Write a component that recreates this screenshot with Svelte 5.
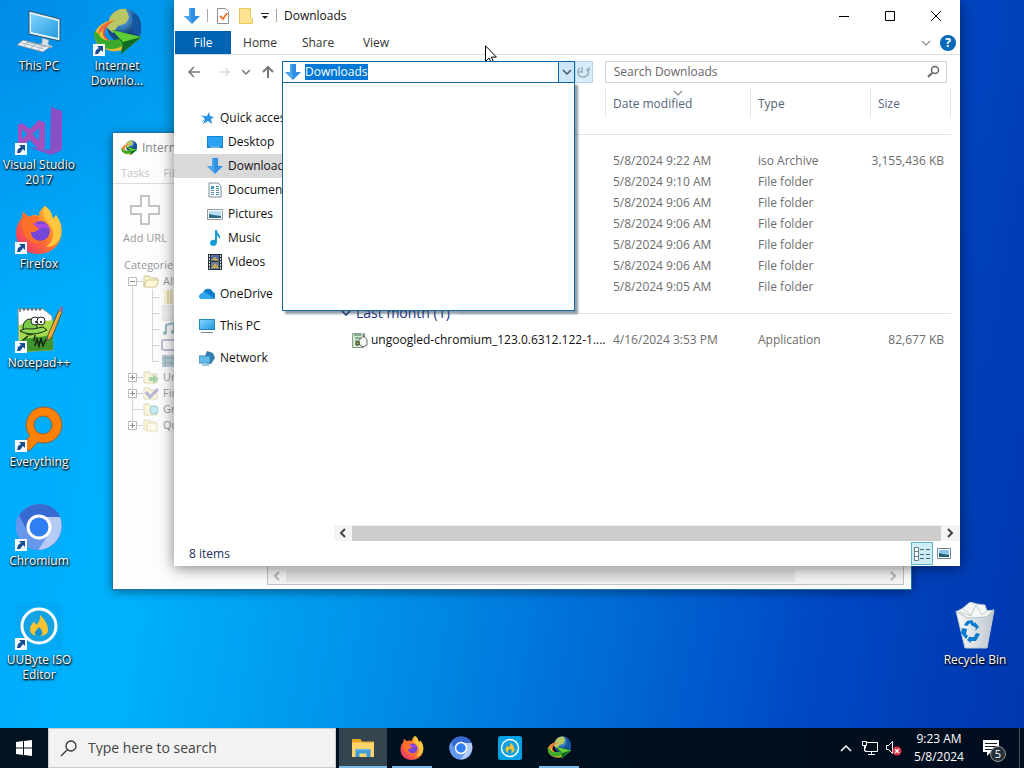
<script>
  import { onMount } from "svelte";

  let path = $state("Downloads");
  let query = $state("");
  let pathInput;

  const shortcuts = [
    { label: "This PC", icon: "pc", col: 1, row: 1 },
    { label: "Visual Studio 2017", icon: "vs", col: 1, row: 2, link: true },
    { label: "Firefox", icon: "firefox", col: 1, row: 3, link: true },
    { label: "Notepad++", icon: "notepad", col: 1, row: 4, link: true },
    { label: "Everything", icon: "everything", col: 1, row: 5, link: true },
    { label: "Chromium", icon: "chromium", col: 1, row: 6, link: true },
    { label: "UUByte ISO Editor", icon: "uubyte", col: 1, row: 7, link: true },
    { label: "Internet Downlo...", icon: "idm", col: 2, row: 1, link: true },
    { label: "Recycle Bin", icon: "bin", col: -2, row: 7 },
  ];

  const places = [
    { label: "Quick access", icon: "star" },
    { label: "Desktop", icon: "desktop", sub: true },
    { label: "Downloads", icon: "arrow", sub: true, selected: true },
    { label: "Documents", icon: "document", sub: true },
    { label: "Pictures", icon: "picture", sub: true },
    { label: "Music", icon: "music", sub: true },
    { label: "Videos", icon: "video", sub: true },
    { label: "OneDrive", icon: "cloud", gap: true },
    { label: "This PC", icon: "monitor", gap: true },
    { label: "Network", icon: "network", gap: true },
  ];

  const recent = [
    { date: "5/8/2024 9:22 AM", type: "iso Archive", size: "3,155,436 KB" },
    { date: "5/8/2024 9:10 AM", type: "File folder" },
    { date: "5/8/2024 9:06 AM", type: "File folder" },
    { date: "5/8/2024 9:06 AM", type: "File folder" },
    { date: "5/8/2024 9:06 AM", type: "File folder" },
    { date: "5/8/2024 9:06 AM", type: "File folder" },
    { date: "5/8/2024 9:05 AM", type: "File folder" },
  ];

  const categories = [
    { label: "All", icon: "folder", box: "minus" },
    { icon: "zip", sub: true },
    { icon: "page", sub: true },
    { icon: "note", sub: true },
    { icon: "screen", sub: true },
    { icon: "film", sub: true },
    { label: "Un", icon: "green", box: "plus" },
    { label: "Fin", icon: "check", box: "plus" },
    { label: "Gr", icon: "globe" },
    { label: "Qu", icon: "stack", box: "plus" },
  ];

  const tasks = [
    { name: "File Explorer", icon: "explorer", open: true, active: true },
    { name: "Firefox", icon: "firefox", open: true },
    { name: "Chromium", icon: "chromium" },
    { name: "UUByte", icon: "uubyte" },
    { name: "Internet Download Manager", icon: "idm", open: true },
  ];

  onMount(() => {
    pathInput.focus();
    pathInput.select();
  });
</script>

{#snippet icon(name)}
  <svg class="icon" viewBox="0 0 48 48" aria-hidden="true">
    {#if name === "pc"}
      <path d="M14 3l31 8v22l-31-7z" fill="#e4f1f8" stroke="#29536e" />
      <path d="M16 6l27 7v17l-27-6z" fill="url(#screen)" />
      <path d="M27 30l7 2-1 4 5 3-8 2-9-4 6-2z" fill="#d8e2e8" stroke="#7890a0" stroke-width=".6" />
      <path d="M8 32l27 7-7 5L2 37z" fill="#eef2f4" stroke="#6f8796" stroke-width=".8" />
      <path d="M7 35l22 6M11 34l20 5M14 34l-5 4M21 36l-5 4M28 38l-5 4" stroke="#a7b6bf" fill="none" />
    {:else if name === "vs"}
      <path d="M36 0l11 4v39l-11 5L13 40l22 3z" fill="#8b50c6" />
      <path fill-rule="evenodd" d="M24 13l6 3v25l-6 2-9-10-8 6-4-2V18l4-2 8 6zM24 21l-6 6 6 7zM7 22v10l5-5z" fill="#a34fbd" />
    {:else if name === "firefox"}
      <path d="M30 0c6 5 7 9 8 13l3-4c5 7 7 14 5 22-3 11-12 17-23 17C10 48 1 39 1 27c0-7 3-12 6-15l1-6 6 5c4-3 8-2 10-1 0-5 3-8 6-10z" fill="url(#fox)" />
      <path d="M30 0c7 5 7 10 8 13l3-4c5 7 7 15 4 23-3 7-9 9-14 9 9-7 9-16 4-22-4-5-9-9-5-19z" fill="#ffc63e" />
      <circle cx="25" cy="25" r="10" fill="#7547d8" />
      <path d="M7 12l1-6 6 5c4-2 8-1 11 1l-5 5 7 4c-4 1-5 6-11 5 0 6 6 11 14 8-10 8-25 0-23-22z" fill="#ff702b" />
      <path d="M17 17l8 1c5-1 9 2 10 6-3-3-7-4-11-1z" fill="#a94ae2" />
    {:else if name === "notepad"}
      <path d="M3 4h25l9 7 1 34-34 2z" fill="#fff" stroke="#8f9c8f" />
      <path d="M4 20l34-5v30L5 47z" fill="#a5da4c" />
      <path d="M4 36c10-5 20-2 34-7v16L5 47z" fill="#3f962c" />
      <path d="M5 4v3m4-4v3m4-3v3m4-3v3m4-3v3m4-3v3" stroke="#333" />
      <ellipse cx="15" cy="22" rx="7" ry="8" fill="#7ac94c" stroke="#182818" />
      <path d="M5 26c8 4 18 4 27-1l-4-3-10 2c-5 0-9-1-13 2z" fill="#92d955" stroke="#182818" />
      <circle cx="20" cy="16" r="4" fill="#fff" stroke="#182818" />
      <circle cx="26" cy="16" r="4" fill="#fff" stroke="#182818" />
      <circle cx="21" cy="17" r="1" /><circle cx="26" cy="17" r="1" />
      <path d="M13 31l-5 4m12-5l-1 6m1 5l2-7 2 7 2-8 2 8 3-7" fill="none" stroke="#162516" stroke-width="1.5" />
      <path d="M33 30L44 5l3 2-10 25-5 4z" fill="#edac32" stroke="#63503b" />
      <path d="M44 5l2-4 3 2-2 5z" fill="#8d70a6" />
    {:else if name === "everything"}
      <path fill-rule="evenodd" d="M28 3a18 18 0 1 1-5 35l-9 9-8-6 9-9A18 18 0 0 1 28 3zm0 9a9 9 0 1 0 0 18 9 9 0 0 0 0-18z" fill="#ff8206" stroke="#8b633c" />
    {:else if name === "chromium"}
      <circle cx="24" cy="24" r="23" fill="#6596e8" />
      <path d="M4 12C17-5 41-1 46 16H24l-9 17z" fill="#376bd2" />
      <path d="M24 14h21c6 17-7 33-22 33l11-17z" fill="#b4ccf5" />
      <path d="M3 13l12 20c5 6 13 5 18-1L23 47C6 46-4 28 3 13z" fill="#6597ed" />
      <circle cx="24" cy="24" r="11" fill="#2f7ff2" stroke="#fff" stroke-width="3" />
    {:else if name === "uubyte"}
      <rect width="48" height="48" rx="5" fill="#05a1e6" />
      <circle cx="24" cy="24" r="17" fill="#13a2e2" stroke="#fff" stroke-width="3" />
      <path d="M25 13c5 5 8 9 8 15 0 4-4 6-9 6s-9-2-9-7c0-4 3-5 4-8l2 4c4-3 4-6 4-10z" fill="#f7c331" />
      <path d="M24 25c3 3 4 5 3 7-1 3-6 3-7 0-1-2 2-4 4-7z" fill="#0a91d1" />
    {:else if name === "idm"}
      <circle cx="31" cy="18" r="17" fill="url(#earth)" />
      <path d="M17 9c4-6 10-9 16-8l3 8-3 6-8 3-5 7-7-6z" fill="#b9c865" />
      <path d="M39 5c9 7 12 16 7 25l-6-7z" fill="#1456a2" />
      <path d="M22 12C9 15 4 26 17 36l13-2C7 35 7 20 22 12z" fill="#ef4936" />
      <path d="M21 12C0 14-5 34 12 41c9 4 15 2 20 0v-8c-14 2-22-1-22-8 0-6 5-10 11-13z" fill="#e8bb31" />
      <path d="M1 23c-1 17 18 22 28 15l-1 8 20-16-28-8 7 9C13 34 8 32 6 26z" fill="#3ca92c" />
      <path d="M22 12C12 14 6 18 5 26l4-3c3-5 7-9 13-11z" fill="#f26a42" />
      <path d="M19 22l29 7-20 17 2-10z" fill="#126b25" />
      <path d="M19 22l29 7-18 5z" fill="#5fce35" />
    {:else if name === "bin"}
      <path d="M5 9l38-1-7 38H14z" fill="#dfe5e8" />
      <path d="M5 9l9 4 20 1 9-6-7 38H14z" fill="url(#bin)" stroke="#bec7cc" />
      <path d="M5 10l7-4 7-6 7 2 8 1 2 6 7-1-8 7-18 1z" fill="#f5f7f7" stroke="#b9c3c8" />
      <path d="M12 7l8 6 5-10 6 10 5-4M8 10l13 4" fill="none" stroke="#c3ccd0" />
      <path d="M16 19l5-1 3 5-3 1-2-3-3 3-3-1zm8 1l4 5-4 4 1-3-3-2zM11 26l5 1-1 5 2 2-2 3-5-6zm8 9h4l2-4 4 1-4 7h-5v2l-4-3 3-4z" fill="#087bd1" />
    {:else if name === "explorer"}
      <path d="M2 6h17l3 5h24v30H2z" fill="#e8a524" />
      <path d="M2 13h44v29H2z" fill="#ffd56b" />
      <path d="M9 42V26h30v16h-8v-7H17v7z" fill="#3e9bd8" />
      <path d="M9 26h30v3H9z" fill="#67b6e6" />
    {/if}
  </svg>
{/snippet}

{#snippet small(name)}
  <svg class="small" viewBox="0 0 16 16" aria-hidden="true">
    {#if name === "arrow"}
      <path d="M5 0h6v8h5l-8 8-8-8h5z" fill="#2f8fe2" />
      <path d="M5 0h2v9l1 6-8-7h5z" fill="#4aa6ec" />
    {:else if name === "star"}
      <path d="M10 2l1 4 4 1-3 2 1 5-4-3-5 3 2-5-3-3h5z" fill="#2b92e5" />
      <path d="M2 6h4M3 12l3-3" stroke="#68b8f4" />
    {:else if name === "desktop"}
      <path d="M0 2h16v12H0z" fill="#1684d6" />
      <path d="M1 3h14v9H1z" fill="#29a3f4" />
      <path d="M3 13h10" stroke="#a5d7fa" />
    {:else if name === "document"}
      <path d="M2 1h9l3 3v11H2z" fill="#fff" stroke="#7f8e98" />
      <path d="M4 4h3v3H4z" fill="#4498bd" />
      <path d="M9 4.500h3M9 6.500h3M4 8.500h3m2 0h3M4 10.500h3m2 0h3M4 12.500h3m2 0h3" stroke="#4d91ad" />
    {:else if name === "picture"}
      <path d="M.5 3.500h15v10H.5z" fill="#fff" stroke="#8f999e" />
      <path d="M2 5h12v7H2z" fill="#b9def2" />
      <path d="M2 8l5 1 7 1v2H2z" fill="#326c88" />
    {:else if name === "music"}
      <path d="M8 0h2c0 4 4 4 3 9l-3-4v7c0 5-7 5-7 1 0-3 3-4 5-3z" fill="#159bd7" />
    {:else if name === "video"}
      <path d="M1 0h14v16H1z" fill="#283039" />
      <path d="M4 1h8v6H4z" fill="#536ca1" /><path d="M4 8h8v7H4z" fill="#697a95" />
      <path d="M4 6l4-3 4 4M4 14l4-5 4 5" fill="#c5a64f" />
      <path d="M2.500 1v15M13.500 1v15" stroke="#dbe3ea" stroke-dasharray="2 1" />
    {:else if name === "cloud"}
      <path d="M4 7c1-5 8-6 10-1 3 1 3 7 0 7H2C-1 12 0 8 4 7z" fill="#087dcc" />
      <path d="M3 7c3-2 6 1 11 5v1H2c-3-1-2-5 1-6z" fill="#33a7ed" />
    {:else if name === "monitor"}
      <path d="M0 1h16v11H0z" fill="#2188c4" />
      <path d="M1 2h14v9H1z" fill="url(#screen)" />
      <path d="M2 14.500h12" stroke="#758896" />
    {:else if name === "network"}
      <path d="M8 1l6 2 2 5-4 6-5-1-1-7z" fill="#367dac" />
      <path d="M0 6h11v7H0z" fill="#64bae8" stroke="#328bc0" />
      <path d="M3 15h7" stroke="#398bc0" />
    {:else if name === "properties"}
      <path d="M2.500.500h8l3 3v12h-11z" fill="#fff" stroke="#8a9094" />
      <path d="M5 8l3 3 4-6" fill="none" stroke="#ed7734" stroke-width="2" />
    {:else if name === "newfolder"}
      <path d="M1.500.500h11v9l2 1v5h-13z" fill="#ffe391" stroke="#e6c85e" />
    {:else if name === "app"}
      <path d="M.5 1.500h9l2 3v11H.5z" fill="#d5ead4" stroke="#8c988b" />
      <path d="M2 3h7M3 6h6M3 9h3" stroke="#367647" />
      <path d="M7 8l5-4 3 4v5l-4 2-4-3z" fill="#f6f7ec" stroke="#667" />
      <path d="M12 1v4M4 10h3v3H4z" stroke="#263c2d" fill="#a8ca33" />
    {:else if name === "refresh"}
      <path d="M4 4c-4 3-2 9 3 9 6 0 7-6 3-8M6 3v5m-3 0h4M13 3v4" fill="none" stroke="#93aebf" stroke-width="1.500" />
    {:else if name === "search"}
      <circle cx="10" cy="6" r="3.500" fill="none" stroke="currentColor" stroke-width="1.500" />
      <path d="M7 9l-4 4" stroke="currentColor" stroke-width="2" />
    {:else if name === "down"}
      <path d="M4 6l4 4 4-4" fill="none" stroke="currentColor" stroke-width="1.500" />
    {:else if name === "left"}
      <path d="M10 4L6 8l4 4" fill="none" stroke="currentColor" stroke-width="2" />
    {:else if name === "right"}
      <path d="M6 4l4 4-4 4" fill="none" stroke="currentColor" stroke-width="2" />
    {:else if name === "back"}
      <path d="M14 8H3m5-5L3 8l5 5" fill="none" stroke="currentColor" stroke-width="1.500" />
    {:else if name === "forward"}
      <path d="M3 8h10M9 4l4 4-4 4" fill="none" stroke="currentColor" stroke-width="1.500" />
    {:else if name === "up"}
      <path d="M8 14V3M3 8l5-5 5 5" fill="none" stroke="currentColor" stroke-width="2" />
    {:else if name === "folder"}
      <path d="M1 14V3h5l2 2h6v3H4z" fill="#f5ecae" stroke="#b4a557" />
      <path d="M1 14l3-7h12l-3 7z" fill="#fff6b9" stroke="#b4a557" />
    {:else if name === "green" || name === "globe" || name === "check"}
      <path d="M1 3h5l1 2h7v9H1z" fill="#f8f1c6" stroke="#c9c38e" />
      {#if name === "green"}<path d="M6 8h4V5l6 5-6 5v-3H6z" fill="#75b777" />{/if}
      {#if name === "globe"}<circle cx="11" cy="9" r="4" fill="#a4ddea" stroke="#59adc4" />{/if}
      {#if name === "check"}<path d="M3 7l4 5 8-8" fill="none" stroke="#8888c2" stroke-width="3" />{/if}
    {:else if name === "stack"}
      <path d="M1 3h5l1 2h5v8H1z" fill="#fff4c9" stroke="#d9c992" /><path d="M4 6h10v8H4z" fill="#fff9dc" stroke="#d9c992" />
    {:else if name === "zip"}
      <path d="M3 1h9v14H3z" fill="#fff1bb" /><path d="M7 1v14m3-14v14" stroke="#b5a058" />
    {:else if name === "page"}
      <path d="M2 1h10v14H2z" fill="#eee" stroke="#ccc" />
    {:else if name === "note"}
      <path d="M5 12V4l8-2v9" fill="none" stroke="#568ca0" stroke-width="2" />
      <circle cx="4" cy="12" r="2" fill="#568ca0" /><circle cx="12" cy="11" r="2" fill="#568ca0" />
    {:else if name === "screen"}
      <rect x="1" y="3" width="14" height="10" rx="2" fill="#fff" stroke="#9c94bd" stroke-width="2" />
    {:else if name === "film"}
      <path d="M1 2h14v12H1z" fill="#8eb7c6" /><path d="M4 2v12M1 5h14M1 10h14" stroke="#557d91" />
    {/if}
  </svg>
{/snippet}

<svg class="defs" aria-hidden="true">
  <defs>
    <linearGradient id="screen" x2="1" y2="1"><stop stop-color="#82d4ff" /><stop offset="1" stop-color="#239bdf" /></linearGradient>
    <linearGradient id="fox" x1="1" y1="0" x2="0" y2="1"><stop stop-color="#ffd83f" /><stop offset=".5" stop-color="#ff792a" /><stop offset="1" stop-color="#ed247f" /></linearGradient>
    <radialGradient id="earth" cx=".4" cy=".25"><stop stop-color="#d7edff" /><stop offset=".5" stop-color="#4387c7" /><stop offset="1" stop-color="#174984" /></radialGradient>
    <linearGradient id="bin"><stop stop-color="#fafafa" /><stop offset="1" stop-color="#bcc6ce" /></linearGradient>
  </defs>
</svg>

<div class="screen">
  <main class="desktop">
    <div class="shortcuts">
      {#each shortcuts as s}
        <button class="shortcut" style:grid-column={s.col} style:grid-row={s.row}>
          <span class="picture">
            {@render icon(s.icon)}
            {#if s.link}
              <svg class="link" viewBox="0 0 12 12" aria-hidden="true">
                <path d="M0 0h12v12H0z" fill="#f7fbff" />
                <path d="M4 2h6v6L8 6l-3 4H2l1-4 3-2z" fill="#174e91" />
              </svg>
            {/if}
          </span>
          <span>{s.label}</span>
        </button>
      {/each}
    </div>

    <section class="window idm">
      <header>
        <span class="mini">{@render icon("idm")}</span>
        <span>Internet</span>
      </header>
      <nav><span>Tasks</span><span>File</span></nav>
      <div class="idm-body">
        <aside>
          <button class="add">
            <svg viewBox="0 0 32 32" aria-hidden="true">
              <path d="M12 2h8v10h10v8H20v10h-8V20H2v-8h10z" fill="#fff" stroke="#c4c4c4" stroke-width="2" />
            </svg>
            Add URL
          </button>
          <p>Categories</p>
          <ul>
            {#each categories as c, i}
              <li class:sub={c.sub}>
                <svg class="branch" viewBox="0 0 16 16" aria-hidden="true">
                  <path d={c.sub ? "M5.5 0v16" : i === 0 ? "M5.5 8v8M6 8.500h10" : i === 9 ? "M5.5 0v8M6 8.500h10" : "M5.5 0v16M6 8.500h10"} stroke="#d5d5d5" fill="none" />
                  {#if c.box}
                    <path d="M1.5 4.500h8v8h-8z" fill="#fff" stroke="#bbb" />
                    <path d={c.box === "plus" ? "M3 8.500h5M5.5 6v5" : "M3 8.500h5"} stroke="#888" />
                  {/if}
                </svg>
                {#if c.sub}
                  <svg class="branch" viewBox="0 0 16 16" aria-hidden="true">
                    <path d={i === 5 ? "M9.5 0v8.500h7" : "M9.5 0v16M9.5 8.500h7"} stroke="#d5d5d5" fill="none" />
                  </svg>
                {/if}
                {@render small(c.icon)}
                {#if c.label}<span>{c.label}</span>{/if}
              </li>
            {/each}
          </ul>
        </aside>
        <div class="list">
          <div class="scroll faint">
            {@render small("left")}
            <span class="thumb"></span>
            {@render small("right")}
          </div>
        </div>
      </div>
    </section>

    <section class="window explorer">
      <header class="title">
        {@render small("arrow")}
        <i></i>
        {@render small("properties")}
        {@render small("newfolder")}
        <svg class="customize" viewBox="0 0 8 8" aria-hidden="true"><path d="M0 1.500h8" stroke="#222" /><path d="M1 4h6L4 7z" fill="#222" /></svg>
        <i></i>
        <h1>Downloads</h1>
        <div class="controls">
          <button aria-label="Minimize"><svg viewBox="0 0 12 12"><path d="M1 6.500h10" stroke="#000" /></svg></button>
          <button aria-label="Maximize"><svg viewBox="0 0 12 12"><path d="M1.5 1.500h9v9h-9z" fill="none" stroke="#000" /></svg></button>
          <button aria-label="Close"><svg viewBox="0 0 12 12"><path d="M1 1l10 10M11 1L1 11" stroke="#000" /></svg></button>
        </div>
      </header>

      <nav class="ribbon">
        <button class="file">File</button>
        <button>Home</button>
        <button>Share</button>
        <button>View</button>
        <span class="grow"></span>
        <button class="expand" aria-label="Expand the ribbon">{@render small("down")}</button>
        <button class="help" aria-label="Help">?</button>
      </nav>

      <div class="toolbar">
        <div class="history">
          <button aria-label="Back">{@render small("back")}</button>
          <button class="off" aria-label="Forward">{@render small("forward")}</button>
          <button class="recent" aria-label="Recent locations">{@render small("down")}</button>
          <button aria-label="Up">{@render small("up")}</button>
        </div>
        <div class="address">
          {@render small("arrow")}
          <input bind:this={pathInput} bind:value={path} aria-label="Address" spellcheck="false" />
          <button aria-label="Previous locations">{@render small("down")}</button>
          <div class="suggestions"></div>
        </div>
        <button class="refresh" aria-label="Refresh">{@render small("refresh")}</button>
        <label class="search">
          <input bind:value={query} placeholder="Search Downloads" aria-label="Search Downloads" />
          {@render small("search")}
        </label>
      </div>

      <div class="panes">
        <aside class="places">
          {#each places as p}
            <button class:sub={p.sub} class:gap={p.gap} class:selected={p.selected}>
              {@render small(p.icon)}
              <span>{p.label}</span>
            </button>
          {/each}
        </aside>
        <div class="files">
          <table>
            <thead>
              <tr>
                <th></th>
                <th class="date">Date modified<span class="sort">{@render small("down")}</span></th>
                <th class="type">Type</th>
                <th class="size">Size</th>
              </tr>
            </thead>
            <tbody>
              <tr class="group"><td colspan="4"><div><hr /></div></td></tr>
              {#each recent as f}
                <tr>
                  <td></td>
                  <td>{f.date}</td>
                  <td>{f.type}</td>
                  <td class="number">{f.size ?? ""}</td>
                </tr>
              {/each}
              <tr class="group">
                <td colspan="4"><div>{@render small("down")}<span>Last month (1)</span><hr /></div></td>
              </tr>
              <tr>
                <td class="name"><div>{@render small("app")}<span>ungoogled-chromium_123.0.6312.122-1....</span></div></td>
                <td>4/16/2024 3:53 PM</td>
                <td>Application</td>
                <td class="number">82,677 KB</td>
              </tr>
            </tbody>
          </table>
          <div class="scroll">
            {@render small("left")}
            <span class="thumb"></span>
            {@render small("right")}
          </div>
        </div>
      </div>

      <footer>
        <span>8 items</span>
        <span class="grow"></span>
        <button class="on" aria-label="Details view">
          <svg viewBox="0 0 18 16" aria-hidden="true">
            <path d="M1.5 1.500h4v13h-4zM1 5.500h5M1 10.500h5" fill="#fff" stroke="#6b7d86" />
            <path d="M7 3.500h4m2 0h4M7 8.500h4m2 0h4M7 12.500h4m2 0h4" stroke="#4a6672" />
          </svg>
        </button>
        <button aria-label="Large icons view">
          <svg viewBox="0 0 18 16" aria-hidden="true">
            <path d="M2.500 2.500h13v10h-13z" fill="#fff" stroke="#68879b" />
            <path d="M4 4h10v7H4z" fill="#8cc8ee" /><path d="M4 7l4 1 6 1v2H4z" fill="#285e70" />
          </svg>
        </button>
      </footer>
    </section>

    <svg class="cursor" viewBox="0 0 12 19" aria-hidden="true">
      <path d="M.5.800v15.700l3.600-3.500 2.400 5.400 2.300-1-2.400-5.300h5z" fill="#fff" stroke="#000" />
    </svg>
  </main>

  <div class="taskbar">
    <button class="start" aria-label="Start">
      <svg viewBox="0 0 16 16"><path d="M0 2l7-1v6.500H0zM8 1l8-1v7.500H8zM0 8.500h7V15l-7-1zM8 8.500h8V16l-8-1z" fill="#fff" /></svg>
    </button>
    <label class="find">
      <svg viewBox="0 0 18 18" aria-hidden="true">
        <circle cx="11" cy="7" r="5" fill="none" stroke="#333" stroke-width="1.300" />
        <path d="M7 11l-6 6" stroke="#333" stroke-width="1.300" />
      </svg>
      <input placeholder="Type here to search" aria-label="Type here to search" />
    </label>
    <div class="tasks">
      {#each tasks as t}
        <button class:open={t.open} class:active={t.active} aria-label={t.name}>{@render icon(t.icon)}</button>
      {/each}
    </div>
    <span class="grow"></span>
    <div class="tray">
      <svg class="chevron" viewBox="0 0 12 8" aria-hidden="true"><path d="M1 7l5-5 5 5" fill="none" stroke="#fff" stroke-width="1.500" /></svg>
      <svg class="net" viewBox="0 0 18 16" aria-hidden="true">
        <path d="M5.500 2.500h11v9h-12V6M7 14.500h7M10.500 12v2" fill="none" stroke="#fff" />
        <path d="M1.500 1.500h4v4h-4zM3.500 6v5h2" fill="#111" stroke="#fff" />
      </svg>
      <svg class="sound" viewBox="0 0 18 16" aria-hidden="true">
        <path d="M1.500 5.500h2l4-4v12l-4-4h-2z" fill="none" stroke="#fff" />
        <circle cx="12" cy="11" r="4.500" fill="#e22d42" />
        <path d="M10 9l4 4m0-4l-4 4" stroke="#fff" stroke-width="1.500" />
      </svg>
      <time>9:23 AM<br />5/8/2024</time>
      <button class="notices" aria-label="Notifications">
        <svg viewBox="0 0 18 18" aria-hidden="true">
          <path d="M1 1h16v12h-8l-4 4v-4H1z" fill="#fff" />
          <path d="M3 4.500h12M3 7.500h12M3 10.500h7" stroke="#111b25" />
        </svg>
        <span>5</span>
      </button>
    </div>
  </div>
</div>

<style>
  :global(body) {
    overflow: hidden;
  }

  .screen {
    display: flex;
    flex-direction: column;
    height: 100vh;
    font: 12px/16px "Open Sans", "Noto Sans", sans-serif;
    color: #222;
  }

  .screen *,
  .screen {
    box-sizing: border-box;
  }

  svg {
    display: block;
    flex: none;
  }

  button {
    border: 0;
    padding: 0;
    background: none;
    font: inherit;
    color: inherit;
  }

  input {
    min-width: 0;
    border: 0;
    padding: 0;
    outline: 0;
    background: none;
    font: inherit;
    color: inherit;
  }

  .defs {
    position: absolute;
    width: 0;
    height: 0;
  }

  .icon {
    width: 100%;
    height: 100%;
  }

  .small {
    width: 16px;
    height: 16px;
  }

  .grow {
    flex: 1;
  }

  .desktop {
    position: relative;
    flex: 1;
    min-height: 0;
    background:
      radial-gradient(ellipse at 0 0, rgba(0, 110, 210, 0.5), transparent 30%),
      linear-gradient(100deg, #00a9fb 0%, #00b2fc 20%, #0095ea 40%, #006fd8 60%, #0046c2 82%, #0037ae 100%);
  }

  /* desktop icons */

  .shortcuts {
    display: grid;
    grid-template-columns: repeat(auto-fill, 78px);
    grid-auto-rows: 99px;
  }

  .shortcut {
    display: flex;
    flex-direction: column;
    align-items: center;
    gap: 2px;
    padding: 8px 2px 0;
    line-height: 15px;
    text-align: center;
    color: #fff;
    text-shadow: 1px 1px 2px #000, 0 1px 2px #000;
  }

  .shortcut rect {
    fill-opacity: 0.4;
  }

  .picture {
    position: relative;
    width: 48px;
    height: 48px;
  }

  .link {
    position: absolute;
    left: 0;
    bottom: 0;
    width: 12px;
    height: 12px;
  }

  /* windows */

  .window {
    position: absolute;
    display: flex;
    flex-direction: column;
    background: #fff;
  }

  .idm {
    left: 113px;
    right: 113px;
    top: 133px;
    bottom: 139px;
    background: #fdfdfd;
    color: #999;
    font-size: 11px;
    box-shadow: 0 0 0 1px #1b76ad, 0 2px 10px rgba(0, 0, 0, 0.5);
  }

  .idm header {
    display: flex;
    align-items: center;
    gap: 5px;
    height: 29px;
    padding-left: 8px;
    font-size: 12px;
    color: #888;
  }

  .mini {
    width: 16px;
    height: 16px;
  }

  .idm nav {
    display: flex;
    gap: 14px;
    height: 22px;
    padding: 3px 8px;
    border-bottom: 1px solid #ddd;
    color: #c4c4c4;
  }

  .idm-body {
    display: flex;
    flex: 1;
    min-height: 0;
  }

  .idm aside {
    width: 154px;
  }

  .add {
    display: flex;
    flex-direction: column;
    align-items: center;
    gap: 4px;
    width: 64px;
    padding-top: 10px;
  }

  .add svg {
    width: 32px;
    height: 32px;
  }

  .idm p {
    margin: 11px 0 0 11px;
  }

  .idm ul {
    margin: 0;
    padding: 0 0 0 14px;
    list-style: none;
  }

  .idm li {
    display: flex;
    height: 16px;
  }

  .idm li > :global(.small) {
    opacity: 0.6;
  }

  .idm li span {
    margin-left: 4px;
  }

  .branch {
    width: 16px;
    height: 16px;
  }

  .sub .branch + .branch {
    margin-right: 2px;
  }

  .list {
    display: flex;
    flex: 1;
    flex-direction: column;
    justify-content: flex-end;
    margin: 0 7px 4px 0;
    border: 1px solid #c2c2c2;
  }

  .scroll {
    display: flex;
    align-items: center;
    height: 16px;
    padding: 0 2px 0 1px;
    background: #f4f4f4;
    color: #444;
  }

  .thumb {
    flex: 1;
    height: 15px;
    margin: 0 1px;
    background: #cdcdcd;
  }

  .faint {
    color: #b5b5b5;
  }

  .faint .thumb {
    height: 12px;
    margin-right: 90px;
    background: #e3e3e3;
  }

  .explorer {
    left: 174px;
    right: 64px;
    top: 0;
    bottom: 162px;
    box-shadow: 0 2px 14px rgba(0, 0, 0, 0.5);
  }

  .title {
    display: flex;
    align-items: center;
    gap: 7px;
    height: 31px;
    padding-left: 10px;
  }

  .title i {
    width: 1px;
    height: 13px;
    background: #aaa;
  }

  .customize {
    width: 8px;
    height: 8px;
  }

  h1 {
    flex: 1;
    margin: 0;
    font-size: 12px;
    font-weight: 400;
    color: #111;
  }

  .controls {
    display: flex;
    margin-right: 1px;
  }

  .controls button {
    display: grid;
    place-items: center;
    width: 46px;
    height: 30px;
  }

  .controls svg {
    width: 12px;
    height: 12px;
  }

  .ribbon {
    display: flex;
    align-items: center;
    height: 24px;
    padding: 0 4px 0 1px;
    border-bottom: 1px solid #dcdcdc;
    color: #333;
  }

  .ribbon button {
    width: 58px;
    height: 23px;
  }

  .ribbon .file {
    width: 56px;
    background: #0063b1;
    color: #fff;
  }

  .ribbon .expand {
    width: 16px;
    margin-right: 6px;
    color: #999;
  }

  .ribbon .help {
    width: 16px;
    height: 16px;
    border-radius: 50%;
    background: #0668b8;
    color: #fff;
    font-weight: 700;
  }

  .toolbar {
    display: flex;
    align-items: flex-start;
    height: 34px;
    padding: 6px 13px 6px 12px;
  }

  .history {
    display: flex;
    align-items: center;
    gap: 10px;
    width: 96px;
    height: 22px;
    color: #777;
  }

  .history .off {
    margin-left: 4px;
    color: #ddd;
  }

  .history .recent {
    width: 8px;
    overflow: hidden;
  }

  .recent :global(.small) {
    margin-left: -4px;
  }

  .address {
    position: relative;
    z-index: 1;
    display: flex;
    align-items: center;
    gap: 4px;
    flex: 293 0 0;
    height: 23px;
    padding-left: 2px;
    border: 1px solid #0a66ad;
    border-bottom-width: 2px;
    background: #fff;
  }

  .address input {
    flex: 1;
    height: 16px;
  }

  .address input::selection {
    background: #0078d7;
    color: #fff;
  }

  .address button {
    align-self: stretch;
    width: 16px;
    border-left: 1px solid #0a66ad;
    background: #cce6f7;
    color: #456;
  }

  .suggestions {
    position: absolute;
    left: -1px;
    right: -1px;
    top: 100%;
    height: 229px;
    border: 1px solid #17679f;
    background: #fff;
    box-shadow: 3px 3px 2px rgba(30, 60, 80, 0.5);
  }

  .refresh {
    display: grid;
    place-items: center;
    width: 18px;
    height: 22px;
    border: 1px solid #b6d5e8;
    background: #d8edf9;
  }

  .search {
    display: flex;
    align-items: center;
    flex: 332 0 0;
    height: 22px;
    margin-left: 12px;
    padding: 0 5px 0 8px;
    border: 1px solid #d5d5d5;
    color: #666;
  }

  .search input {
    flex: 1;
  }

  input::placeholder {
    color: #666;
    opacity: 1;
  }

  .panes {
    display: flex;
    flex: 1;
    min-height: 0;
  }

  .places {
    width: 160px;
    padding-top: 17px;
    color: #111;
  }

  .places button {
    display: flex;
    align-items: center;
    gap: 5px;
    width: 100%;
    height: 24px;
    padding-left: 25px;
    white-space: nowrap;
  }

  .places .sub {
    padding-left: 33px;
  }

  .places .gap {
    margin-top: 8px;
  }

  .places .selected {
    background: #d9d9d9;
  }

  .files {
    display: flex;
    flex: 1;
    flex-direction: column;
    min-width: 0;
  }

  .files .scroll {
    margin-top: auto;
  }

  table {
    width: calc(100% - 18px);
    margin-left: 9px;
    border-spacing: 0;
    table-layout: fixed;
    color: #6d6d6d;
  }

  th {
    position: relative;
    height: 29px;
    padding: 0 7px;
    border-right: 1px solid #e6e6e6;
    font-weight: 400;
    text-align: left;
    color: #56657a;
  }

  .date {
    width: 145px;
  }

  .type {
    width: 120px;
  }

  .size {
    width: 80px;
  }

  .sort {
    position: absolute;
    top: -4px;
    left: 64px;
    color: #999;
  }

  td {
    height: 21px;
    padding: 0 7px;
    white-space: nowrap;
  }

  .number {
    padding-left: 0;
    text-align: right;
  }

  .name {
    color: #111;
  }

  .name div {
    display: flex;
    gap: 3px;
    margin: 0 -7px 0 2px;
  }

  .group td {
    height: 32px;
    padding: 0;
    color: #1e3287;
    font-size: 14px;
  }

  .group div {
    display: flex;
    align-items: center;
    gap: 2px;
    margin-left: -5px;
  }

  .group hr {
    flex: 1;
    margin: 0 0 0 6px;
    border: 0;
    border-top: 1px solid #e2e2e2;
  }

  footer {
    display: flex;
    align-items: center;
    height: 25px;
    padding: 0 5px 0 15px;
    color: #1d2f5a;
  }

  footer button {
    display: grid;
    place-items: center;
    width: 22px;
    height: 23px;
  }

  footer .on {
    border: 1px solid #5bb5cf;
    background: #cdecf6;
  }

  footer svg {
    width: 18px;
    height: 16px;
  }

  .cursor {
    position: absolute;
    left: 485px;
    top: 45px;
    width: 12px;
    height: 19px;
  }

  /* taskbar */

  .taskbar {
    display: flex;
    height: 40px;
    background: linear-gradient(90deg, #00131f, #000d1e);
    color: #fff;
  }

  .start {
    display: grid;
    place-items: center;
    width: 48px;
  }

  .start svg {
    width: 16px;
    height: 16px;
  }

  .find {
    display: flex;
    align-items: center;
    gap: 10px;
    width: 288px;
    padding-left: 11px;
    border: 1px solid #ccc;
    background: #f2f2f2;
    font-size: 14px;
  }

  .find svg {
    width: 18px;
    height: 18px;
  }

  .find input {
    flex: 1;
    color: #333;
  }

  .find input::placeholder {
    color: #444;
  }

  .tasks {
    display: flex;
    gap: 1px;
    margin-left: 3px;
  }

  .tasks button {
    position: relative;
    width: 48px;
    padding: 8px 12px;
  }

  .tasks .active {
    background: #34454f;
  }

  .tasks .open::after {
    content: "";
    position: absolute;
    left: 4px;
    right: 4px;
    bottom: 0;
    height: 2px;
    background: #7ab8e8;
  }

  .tasks .active::after {
    left: 0;
    right: 0;
  }

  .tray {
    display: flex;
    align-items: center;
    margin-right: 4px;
    border-right: 1px solid #46505c;
  }

  .chevron {
    width: 12px;
    height: 8px;
    margin-right: 9px;
  }

  .net,
  .sound {
    width: 18px;
    height: 16px;
    margin-right: 6px;
  }

  time {
    width: 60px;
    line-height: 18px;
    text-align: center;
  }

  .notices {
    position: relative;
    width: 18px;
    margin: 0 19px 0 13px;
  }

  .notices span {
    position: absolute;
    left: 8px;
    top: 7px;
    width: 16px;
    height: 16px;
    border: 1px solid #999;
    border-radius: 50%;
    background: #26303a;
    font-size: 11px;
    line-height: 14px;
  }
</style>
